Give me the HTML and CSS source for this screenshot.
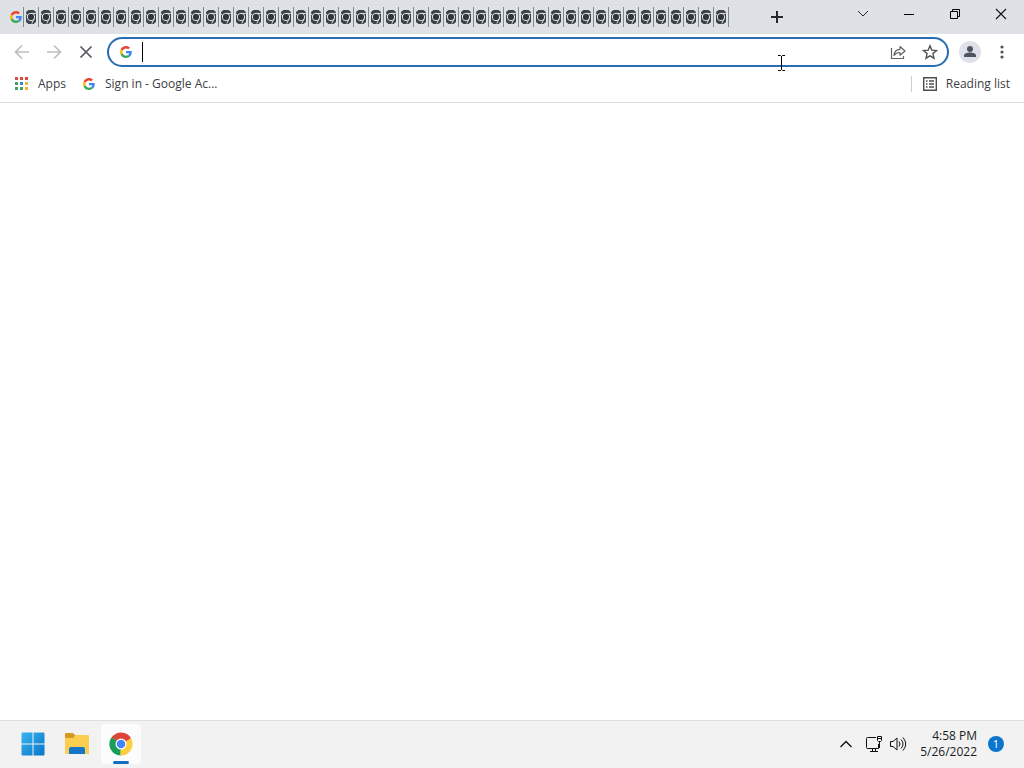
FILE: index.html
```html
<!DOCTYPE html>
<html lang="en">
<head>
<meta charset="utf-8">
<meta name="viewport" content="width=device-width, initial-scale=1">
<title>New Tab</title>
<link rel="stylesheet" href="styles.css">
<script src="tabs.js" defer></script>
</head>
<body>
<svg class="symbols" aria-hidden="true">
  <symbol id="google" viewBox="0 0 48 48">
    <path fill="#ea4335" d="M24 9.500c3.500 0 6.700 1.200 9.200 3.600l6.900-6.900C35.900 2.400 30.500 0 24 0 14.600 0 6.500 5.400 2.600 13.200l8 6.200C12.400 13.700 17.700 9.500 24 9.500z"/>
    <path fill="#4285f4" d="M47 24.500c0-1.600-.2-3.100-.4-4.500H24v9h12.900c-.6 3-2.200 5.500-4.700 7.200l7.700 6C44.400 38 47 31.800 47 24.500z"/>
    <path fill="#fbbc05" d="M10.500 28.600a14.500 14.500 0 0 1 0-9.200l-8-6.200a24 24 0 0 0 0 21.600z"/>
    <path fill="#34a853" d="M24 48c6.500 0 11.900-2.100 15.900-5.800l-7.700-6c-2.200 1.500-4.900 2.300-8.200 2.300-6.300 0-11.600-4.200-13.500-9.900l-8 6.200C6.500 42.600 14.600 48 24 48z"/>
  </symbol>
  <symbol id="mono" viewBox="0 0 10 14">
    <path d="M2.500 0h5L10 2v10l-2.500 2h-5L0 12V2z" fill="#3c4247"/>
    <circle cx="5" cy="7" r="3.700" fill="none" stroke="#dee1e6" stroke-width="1"/>
    <circle cx="5" cy="7" r="2.700" fill="#2f353a"/>
    <path d="M0 3.500 1.800 6M5 3.400H10M8.200 8.500 5.800 13.500" stroke="#dee1e6" fill="none"/>
  </symbol>
</svg>

<header class="browser">
  <div class="titlebar">
    <div class="tabs" role="tablist">
      <button class="tab" role="tab" aria-label="Google" aria-selected="true"><svg class="tab-google"><use href="#google"/></svg></button>
    </div>
    <button class="new-tab" aria-label="New tab"><svg width="12" height="12" viewBox="0 0 12 12"><path d="M6 0v12M0 6h12" stroke="#24272b" stroke-width="2"/></svg></button>
    <div class="window-controls">
      <button class="window-button" aria-label="Search tabs"><svg width="12" height="12" viewBox="0 0 12 12"><path d="m1 3 5 5 5-5" fill="none" stroke="#24272b"/></svg></button>
      <button class="window-button" aria-label="Minimize"><svg width="12" height="12" viewBox="0 0 12 12"><path d="M1 6.500h10" stroke="#000"/></svg></button>
      <button class="window-button" aria-label="Restore"><svg width="12" height="12" viewBox="0 0 12 12"><path d="M1.500 3.500h7v7h-7zM3.500 3V1.500h7v7H9" fill="none" stroke="#000"/></svg></button>
      <button class="window-button" aria-label="Close"><svg width="12" height="12" viewBox="0 0 12 12"><path d="m1 1 10 10M11 1 1 11" stroke="#111" stroke-width="1.100"/></svg></button>
    </div>
  </div>

  <div class="toolbar">
    <button class="tool" aria-label="Back"><svg width="16" height="16" viewBox="0 0 16 16"><path d="M15 8H2M8 1.500 1.500 8 8 14.500" fill="none" stroke="#bdbfc2" stroke-width="1.700"/></svg></button>
    <button class="tool" aria-label="Forward"><svg width="16" height="16" viewBox="0 0 16 16"><path d="M1 8h13M8 1.500 14.500 8 8 14.500" fill="none" stroke="#bdbfc2" stroke-width="1.700"/></svg></button>
    <button class="tool" aria-label="Stop"><svg width="16" height="16" viewBox="0 0 16 16"><path d="m2.500 2.500 11 11M13.500 2.500l-11 11" stroke="#54585c" stroke-width="1.700"/></svg></button>
    <div class="omnibox">
      <svg class="site-icon" aria-hidden="true"><use href="#google"/></svg>
      <span class="caret"></span>
      <input class="address" type="text" aria-label="Address and search bar">
      <button class="tool" aria-label="Share"><svg width="16" height="16" viewBox="0 0 16 16"><path d="M1.500 4v10.500h12V12M4 11.500c.3-4 2.500-6 6-6.200V2.500L15 7l-5 4.200V8.500c-3 0-4.600.9-6 3z" fill="none" stroke="#5f6368" stroke-width="1.200" stroke-linejoin="round"/></svg></button>
      <button class="tool" aria-label="Bookmark this tab"><svg width="16" height="16" viewBox="0 0 16 16"><path d="m8 1.800 1.800 4.300 4.700.4-3.600 3.100 1.100 4.600L8 11.800l-4 2.400 1.100-4.600-3.600-3.100 4.700-.4z" fill="none" stroke="#505458" stroke-width="1.400"/></svg></button>
      <svg class="pointer" viewBox="0 0 9 16" aria-hidden="true"><path d="M1 .5h2.500l1 1 1-1H8M4.500 1v14M1 15.500h2.500l1-1 1 1H8" fill="none" stroke="#000"/></svg>
    </div>
    <button class="tool profile" aria-label="Profile"><svg width="22" height="22" viewBox="0 0 22 22"><circle cx="11" cy="11" r="11" fill="#dfe1ea"/><circle cx="11" cy="8" r="3" fill="#4d5361"/><path d="M5 16v-1.500c0-2 3-3 6-3s6 1 6 3V16z" fill="#4d5361"/></svg></button>
    <button class="tool" aria-label="Menu"><svg width="16" height="16" viewBox="0 0 16 16" fill="#505458"><circle cx="8" cy="3" r="1.600"/><circle cx="8" cy="8" r="1.600"/><circle cx="8" cy="13" r="1.600"/></svg></button>
  </div>

  <nav class="bookmarks" aria-label="Bookmarks">
    <a class="bookmark" href="#apps">
      <svg width="14" height="14" viewBox="0 0 14 14"><path fill="#d94b42" d="M1 0h3v3H1zM6 0h3v3H6zM11 0h3v3h-3z"/><path fill="#41a45c" d="M1 5h3v3H1zM1 10h3v3H1zM6 10h3v3H6z"/><path fill="#2f84dc" d="M6 5h3v3H6z"/><path fill="#edb42c" d="M11 5h3v3h-3zM11 10h3v3h-3z"/></svg>
      <span>Apps</span>
    </a>
    <a class="bookmark" href="#signin"><svg class="site-icon" aria-hidden="true"><use href="#google"/></svg><span>Sign in - Google Ac...</span></a>
    <button class="bookmark reading"><svg width="14" height="14" viewBox="0 0 14 14"><path d="M.7.7h12.600v12.600H.7z" fill="none" stroke="#4b4f53" stroke-width="1.400"/><path d="M3 4h1.500M6 4h5M3 7h1.500M6 7h5M3 10h1.500M6 10h5" stroke="#4b4f53" stroke-width="1.400"/></svg><span>Reading list</span></button>
  </nav>
</header>

<main class="page"></main>

<footer class="taskbar">
  <div class="launchers">
    <button class="launcher" aria-label="Start"><svg width="24" height="24" viewBox="0 0 24 24"><defs><linearGradient id="win" x2="1" y2="1"><stop stop-color="#38b5ee"/><stop offset="1" stop-color="#0874ca"/></linearGradient></defs><path d="M1.500.5H11.500V11.500H.5v-10a1 1 0 0 1 1-1zM12.500.5h10a1 1 0 0 1 1 1v10h-11zM.5 12.500h11v11h-10a1 1 0 0 1-1-1zM12.500 12.500h11v10a1 1 0 0 1-1 1h-10z" fill="url(#win)"/></svg></button>
    <button class="launcher" aria-label="File Explorer"><svg width="26" height="24" viewBox="0 0 26 24"><path d="M1 2a1 1 0 0 1 1-1h7l3 3v4H1z" fill="#d79a20"/><path d="M1 6h8l3-3h12a1 1 0 0 1 1 1v18H2a1 1 0 0 1-1-1z" fill="#fbce4f"/><path d="M5 22v-5a2 2 0 0 1 2-2h12a2 2 0 0 1 2 2v5z" fill="#1476c7"/></svg></button>
    <button class="launcher launcher-active" aria-label="Google Chrome"><svg width="24" height="24" viewBox="0 0 48 48"><path d="M24 24 4.900 11A23 23 0 0 1 44 12.500z" fill="#db4437"/><path d="M24 24 44 12.500A23 23 0 0 1 23 47z" fill="#ffcd40"/><path d="M24 24 23 47A23 23 0 0 1 4.900 11z" fill="#1a9d58"/><path d="M24 13h20.300l-.3-.5L24 24z" fill="#db4437"/><path d="M33.500 29.500 23 47l1-23z" fill="#ffcd40"/><path d="M14.500 29.500 4.900 11 24 24z" fill="#1a9d58"/><circle cx="24" cy="24" r="11" fill="#fff"/><circle cx="24" cy="24" r="8.500" fill="#4285f4"/></svg></button>
  </div>
  <div class="tray">
    <button class="tray-button" aria-label="Hidden icons"><svg width="14" height="14" viewBox="0 0 14 14"><path d="m1.500 10 5.500-5.500 5.500 5.500" fill="none" stroke="#111" stroke-width="1.400"/></svg></button>
    <button class="tray-button" aria-label="Network"><svg width="18" height="18" viewBox="0 0 18 18" fill="none" stroke="#111"><path d="M11 2.500H2.500a1 1 0 0 0-1 1v9a1 1 0 0 0 1 1h11V9M7.500 14v2.500M5 16.500h8M10.500 14v2.500M12.500 1.500h4v4l-1 1h-2l-1-1zM12.500 3.500h4M14.500 7v6"/></svg></button>
    <button class="tray-button" aria-label="Volume"><svg width="18" height="18" viewBox="0 0 18 18" fill="none" stroke="#111"><path d="M1.500 6.500H4l4-3.500v12l-4-3.500H1.500zM10 6.500q2 2.500 0 5M12 4.500q4 4.500 0 9M14 2.500q5.500 6.500 0 13"/></svg></button>
    <button class="clock"><time datetime="2022-05-26T16:58">4:58 PM<br>5/26/2022</time></button>
    <button class="notifications" aria-label="1 notification">1</button>
  </div>
</footer>
</body>
</html>
```

FILE: styles.css
```css
* { box-sizing: border-box; }

body {
  margin: 0;
  min-height: 100vh;
  display: flex;
  flex-direction: column;
  background: #fff;
  color: #3c4043;
  font: 12px/16px "Open Sans", "Noto Sans", sans-serif;
}

button {
  display: flex;
  align-items: center;
  justify-content: center;
  padding: 0;
  border: 0;
  background: none;
  color: inherit;
  font: inherit;
}

a { color: inherit; text-decoration: none; }
svg { display: block; flex: none; }
.symbols { position: absolute; width: 0; height: 0; }

.titlebar {
  display: flex;
  height: 34px;
  background: #dee1e6;
}

.tabs {
  display: flex;
  align-items: center;
  padding-left: 9px;
}

.tab {
  width: 15px;
  height: 20px;
  border-right: 1px solid #85898e;
}

.tab-mono { width: 10px; height: 14px; }
.tab-google { width: 12px; height: 12px; }
.new-tab { width: 28px; margin-left: 34px; }
.window-controls { display: flex; margin-left: auto; padding-bottom: 6px; }
.window-button { width: 46px; }

.toolbar {
  display: flex;
  align-items: center;
  height: 36px;
  gap: 8px;
  padding: 0 10px;
}

.tool { width: 24px; height: 24px; flex: none; }

.omnibox {
  position: relative;
  display: flex;
  align-items: center;
  flex: 1;
  gap: 8px;
  height: 30px;
  margin-left: 1px;
  padding: 0 5px 0 11px;
  border: 2px solid #2a6cb3;
  border-radius: 15px;
}

.site-icon { width: 12px; height: 12px; }
.caret { width: 1px; height: 20px; margin-left: 2px; background: #000; }

.address {
  flex: 1;
  min-width: 0;
  border: 0;
  outline: 0;
  background: none;
  font: inherit;
}

.pointer {
  position: absolute;
  right: 161px;
  bottom: -6px;
  width: 9px;
  height: 16px;
}

.profile { margin-left: 1px; }

.bookmarks {
  display: flex;
  align-items: center;
  gap: 17px;
  height: 33px;
  padding: 0 14px 5px;
  border-bottom: 1px solid #d9dbde;
}

.bookmark { display: flex; align-items: center; gap: 10px; }

.reading {
  gap: 9px;
  margin-left: auto;
  padding-left: 11px;
  border-left: 1px solid #cacdd1;
}

.page { flex: 1; }

.taskbar {
  display: flex;
  align-items: center;
  justify-content: space-between;
  height: 48px;
  padding: 0 20px 2px 13px;
  border-top: 1px solid #dedede;
  background: #f2f2f2;
  color: #1b1b1b;
}

.launchers { display: flex; gap: 4px; }
.launcher { width: 40px; height: 40px; border-radius: 4px; }
.launcher-active { position: relative; background: #fcfcfc; }

.launcher-active::after {
  content: "";
  position: absolute;
  bottom: 0;
  width: 16px;
  height: 3px;
  border-radius: 2px;
  background: #1270be;
}

.tray { display: flex; align-items: center; }
.tray-button { width: 24px; height: 32px; }
.tray-button:first-child { width: 32px; }
.clock { margin: 0 11px 0 12px; text-align: right; }
.tray-button + .clock { margin-left: 10px; }

.notifications {
  width: 16px;
  height: 16px;
  border-radius: 50%;
  background: #0b75cd;
  color: #fff;
  font-size: 11px;
}
```

FILE: tabs.js
```js
const tabs = document.querySelector(".tabs");

for (let i = 0; i < 47; i += 1) {
  tabs.insertAdjacentHTML(
    "beforeend",
    '<button class="tab" role="tab" aria-label="New Tab"><svg class="tab-mono"><use href="#mono"/></svg></button>'
  );
}
```
